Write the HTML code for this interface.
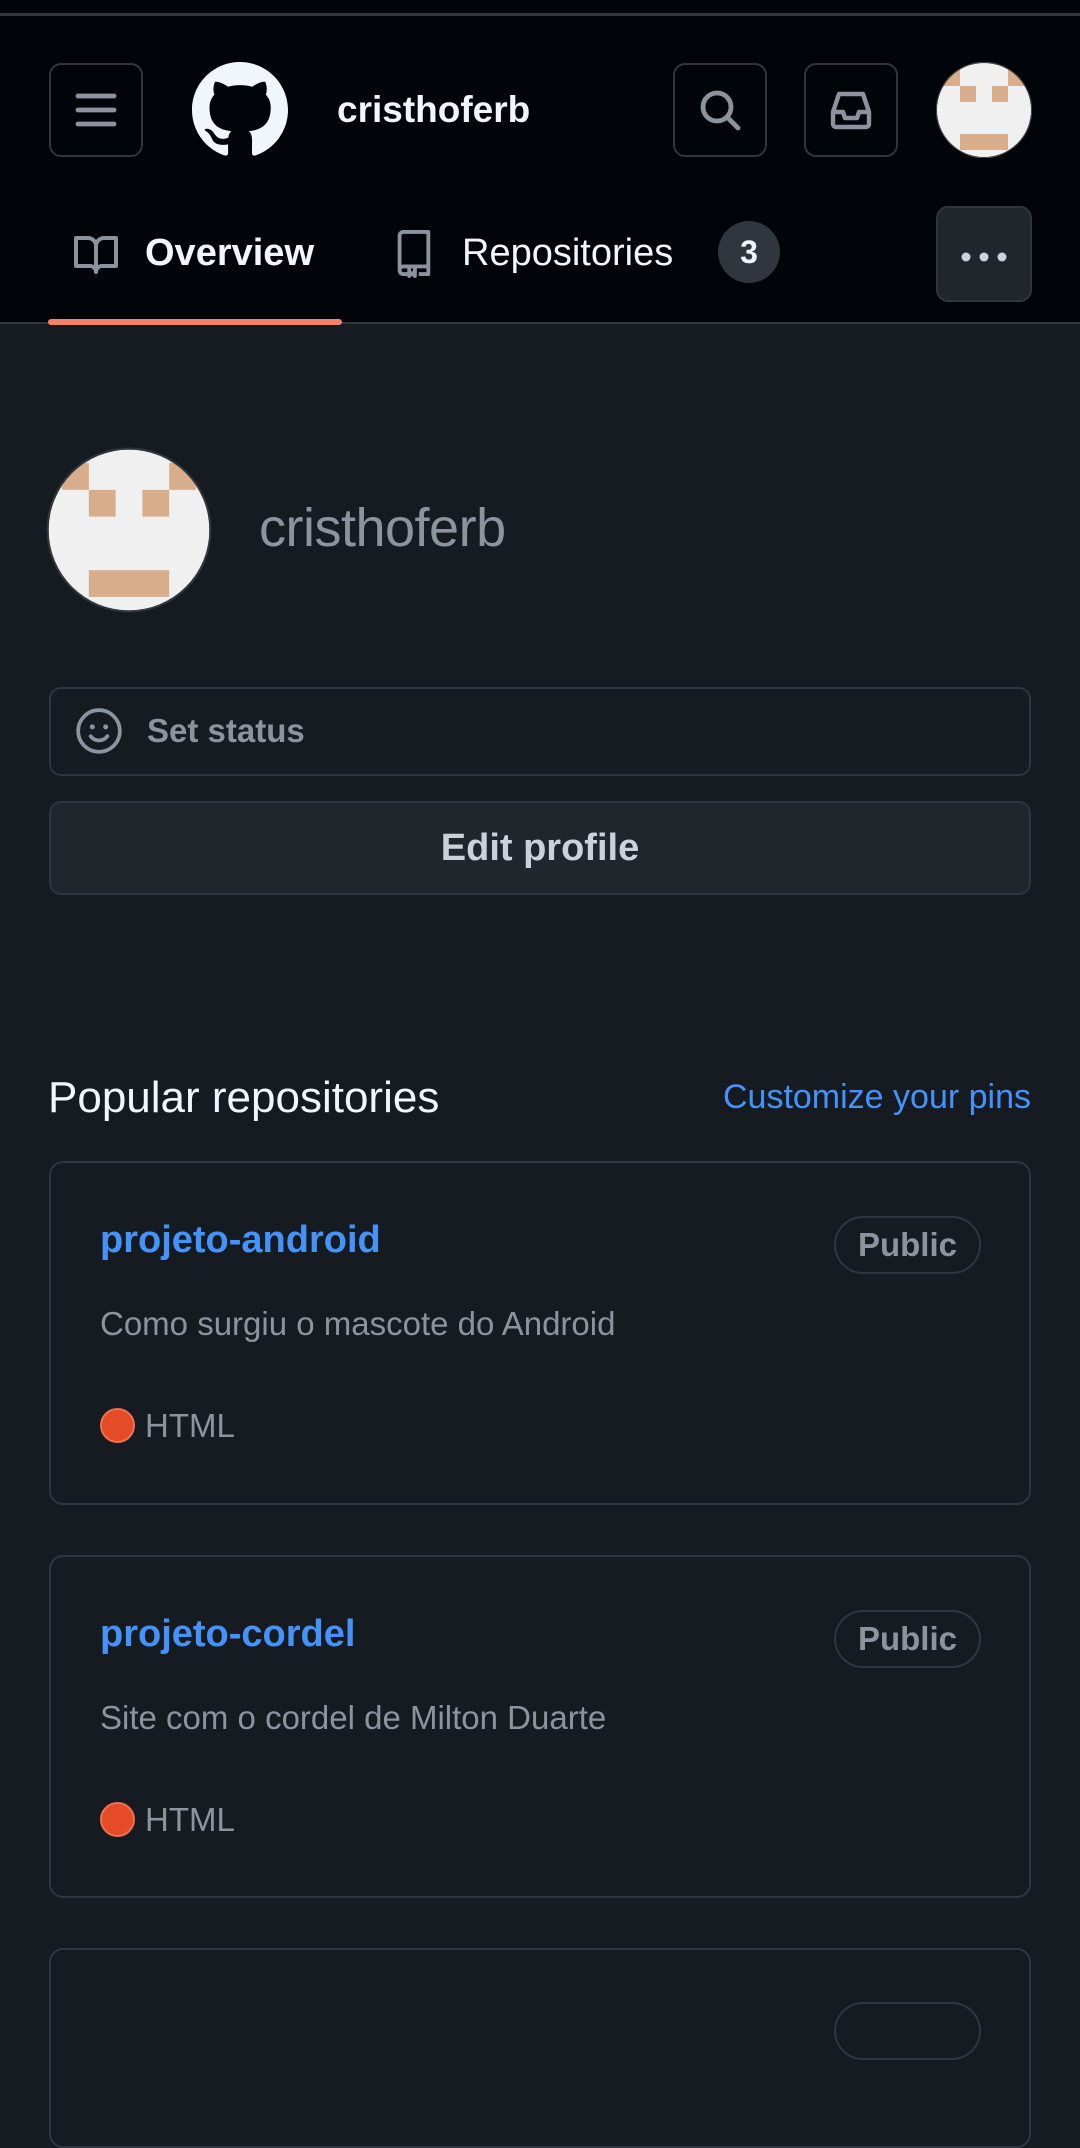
<!DOCTYPE html>
<html><head><meta charset="utf-8"><style>
*{margin:0;padding:0;box-sizing:border-box}
body{width:1080px;height:2009px;background:#161b22;font-family:"Liberation Sans",sans-serif;position:relative;overflow:hidden}
.a{position:absolute}
.hdr{left:0;top:0;width:1080px;height:324px;background:#010409}
.box{border:2px solid #30363d;border-radius:12px}
.t{white-space:nowrap;line-height:1}
.card{left:49px;width:982px;border:2px solid #30363d;border-radius:14px}
.pill{border:2px solid #30363d;border-radius:30px;color:#8b949e;font-size:33px;font-weight:bold;display:flex;align-items:center;justify-content:center}
</style></head><body>
<div class="a hdr"></div>
<div class="a" style="left:0;top:13px;width:1080px;height:3px;background:#30363d"></div>
<div class="a box" style="left:49px;top:63px;width:94px;height:94px"></div>
<svg class="a" style="left:72px;top:86px" width="48" height="48" viewBox="0 0 24 24"><path d="M3 5h18M3 12h18M3 19h18" stroke="#8b949e" stroke-width="2.4" stroke-linecap="round"/></svg>
<svg class="a" style="left:192px;top:62px" width="96" height="96" viewBox="0 0 16 16"><path fill="#f0f6fc" d="M8 0C3.58 0 0 3.58 0 8c0 3.54 2.29 6.53 5.47 7.59.4.07.55-.17.55-.38 0-.19-.01-.82-.01-1.49-2.01.37-2.53-.49-2.69-.94-.09-.23-.48-.94-.82-1.13-.28-.15-.68-.52-.01-.53.63-.01 1.08.58 1.23.82.72 1.21 1.87.87 2.33.66.07-.52.28-.87.51-1.07-1.78-.2-3.64-.89-3.64-3.95 0-.87.31-1.59.82-2.15-.08-.2-.36-1.02.08-2.12 0 0 .67-.21 2.2.82.64-.18 1.32-.27 2-.27.68 0 1.36.09 2 .27 1.53-1.04 2.2-.82 2.2-.82.44 1.1.16 1.92.08 2.12.51.56.82 1.27.82 2.15 0 3.07-1.87 3.75-3.65 3.95.29.25.54.73.54 1.48 0 1.07-.01 1.93-.01 2.2 0 .21.15.46.55.38A8.013 8.013 0 0016 8c0-4.42-3.58-8-8-8z"/></svg>
<div class="a t" style="left:337px;top:91px;font-size:37px;font-weight:bold;color:#f0f6fc">cristhoferb</div>
<div class="a box" style="left:673px;top:63px;width:94px;height:94px"></div>
<svg class="a" style="left:696px;top:86px" width="48" height="48" viewBox="0 0 24 24"><circle cx="10.5" cy="10.5" r="7" fill="none" stroke="#8b949e" stroke-width="2.4"/><path d="M15.5 15.5L21 21" stroke="#8b949e" stroke-width="2.4" stroke-linecap="round"/></svg>
<div class="a box" style="left:804px;top:63px;width:94px;height:94px"></div>
<svg class="a" style="left:827px;top:86px" width="48" height="48" viewBox="0 0 24 24"><path d="M3 13l3-9h12l3 9v6a1.5 1.5 0 01-1.5 1.5h-15A1.5 1.5 0 013 19z M3 13h5l1 3h6l1-3h5" fill="none" stroke="#8b949e" stroke-width="2.2" stroke-linejoin="round"/></svg>
<svg class="a" style="left:936px;top:62px" width="96" height="96" viewBox="0 0 6 6"><defs><clipPath id="c1"><circle cx="3" cy="3" r="3"/></clipPath></defs><g clip-path="url(#c1)"><rect width="6" height="6" fill="#f0f0f0"/><g fill="#d8ad8c"><rect x=".5" y=".5" width="1" height="1"/><rect x="4.5" y=".5" width="1" height="1"/><rect x="1.5" y="1.5" width="1" height="1"/><rect x="3.5" y="1.5" width="1" height="1"/><rect x="1.5" y="4.5" width="3" height="1"/></g></g><circle cx="3" cy="3" r="2.97" fill="none" stroke="#30363d" stroke-width=".06"/></svg>
<!-- tabs -->
<svg class="a" style="left:72px;top:230px" width="48" height="48" viewBox="0 0 24 24"><path d="M2 4h6a4 4 0 014 4v13a3 3 0 00-3-3H2z M22 4h-6a4 4 0 00-4 4v13a3 3 0 013-3h7z" fill="none" stroke="#8b949e" stroke-width="2" stroke-linejoin="round"/></svg>
<div class="a t" style="left:145px;top:234px;font-size:38px;font-weight:bold;color:#f0f6fc">Overview</div>
<svg class="a" style="left:390px;top:228px" width="46" height="50" viewBox="0 0 24 26"><path d="M5 22V4a2 2 0 012-2h13v18H7a2 2 0 00-2 2 2 2 0 002 2h2 M20 20v4h-5 M10 21v4l1.5-1.5L13 25v-4" fill="none" stroke="#8b949e" stroke-width="2" stroke-linejoin="round"/></svg>
<div class="a t" style="left:462px;top:234px;font-size:38px;color:#f0f6fc">Repositories</div>
<div class="a" style="left:718px;top:221px;width:62px;height:62px;border-radius:31px;background:#30363d;color:#f0f6fc;font-size:32px;font-weight:bold;display:flex;align-items:center;justify-content:center">3</div>
<div class="a box" style="left:936px;top:206px;width:96px;height:96px;background:#21262d"></div>
<div class="a" style="left:961px;top:249px;width:46px;height:10px"><svg width="46" height="10"><circle cx="5" cy="5" r="4.5" fill="#c9d1d9"/><circle cx="23" cy="5" r="4.5" fill="#c9d1d9"/><circle cx="41" cy="5" r="4.5" fill="#c9d1d9"/></svg></div>
<div class="a" style="left:0;top:322px;width:1080px;height:2px;background:#30363d"></div>
<div class="a" style="left:48px;top:319px;width:294px;height:6px;border-radius:3px;background:#f78166"></div>
<!-- profile -->
<svg class="a" style="left:46px;top:447px" width="166" height="166" viewBox="-0.1 -0.1 6.2 6.2"><defs><clipPath id="c2"><circle cx="3" cy="3" r="3"/></clipPath></defs><circle cx="3" cy="3" r="3.08" fill="#30363d"/><g clip-path="url(#c2)"><rect width="6" height="6" fill="#f0f0f0"/><g fill="#d8ad8c"><rect x=".5" y=".5" width="1" height="1"/><rect x="4.5" y=".5" width="1" height="1"/><rect x="1.5" y="1.5" width="1" height="1"/><rect x="3.5" y="1.5" width="1" height="1"/><rect x="1.5" y="4.5" width="3" height="1"/></g></g></svg>
<div class="a t" style="left:259px;top:501px;font-size:54px;color:#8b949e;letter-spacing:-0.5px">cristhoferb</div>
<div class="a box" style="left:49px;top:687px;width:982px;height:89px"></div>
<svg class="a" style="left:74px;top:706px" width="50" height="50" viewBox="0 0 24 24"><circle cx="12" cy="12" r="10" fill="none" stroke="#8b949e" stroke-width="1.8"/><circle cx="8.8" cy="10" r="1.2" fill="#8b949e"/><circle cx="15.2" cy="10" r="1.2" fill="#8b949e"/><path d="M8 14.5a5 5 0 008 0" fill="none" stroke="#8b949e" stroke-width="1.8" stroke-linecap="round"/></svg>
<div class="a t" style="left:147px;top:714px;font-size:33px;font-weight:bold;color:#8b949e">Set status</div>
<div class="a box" style="left:49px;top:801px;width:982px;height:94px;background:#21262d;display:flex;align-items:center;justify-content:center;color:#c9d1d9;font-size:38px;font-weight:bold">Edit profile</div>
<!-- popular -->
<div class="a t" style="left:48px;top:1076px;font-size:44px;color:#f0f6fc">Popular repositories</div>
<div class="a t" style="right:49px;top:1080px;font-size:34px;color:#4493f8">Customize your pins</div>
<div class="a card" style="top:1161px;height:344px"></div>
<div class="a t" style="left:100px;top:1221px;font-size:38px;font-weight:bold;color:#4493f8">projeto-android</div>
<div class="a pill" style="left:834px;top:1216px;width:147px;height:58px">Public</div>
<div class="a t" style="left:100px;top:1307px;font-size:33px;color:#8b949e">Como surgiu o mascote do Android</div>
<div class="a" style="left:100px;top:1408px;width:35px;height:35px;border-radius:50%;background:#e34c26;border:2px solid #f0714f"></div>
<div class="a t" style="left:145px;top:1409px;font-size:33px;color:#8b949e">HTML</div>
<div class="a card" style="top:1555px;height:343px"></div>
<div class="a t" style="left:100px;top:1615px;font-size:38px;font-weight:bold;color:#4493f8">projeto-cordel</div>
<div class="a pill" style="left:834px;top:1610px;width:147px;height:58px">Public</div>
<div class="a t" style="left:100px;top:1701px;font-size:33px;color:#8b949e">Site com o cordel de Milton Duarte</div>
<div class="a" style="left:100px;top:1802px;width:35px;height:35px;border-radius:50%;background:#e34c26;border:2px solid #f0714f"></div>
<div class="a t" style="left:145px;top:1803px;font-size:33px;color:#8b949e">HTML</div>
<div class="a card" style="top:1948px;height:200px"></div>
<div class="a pill" style="left:834px;top:2002px;width:147px;height:58px"></div>
</body></html>
